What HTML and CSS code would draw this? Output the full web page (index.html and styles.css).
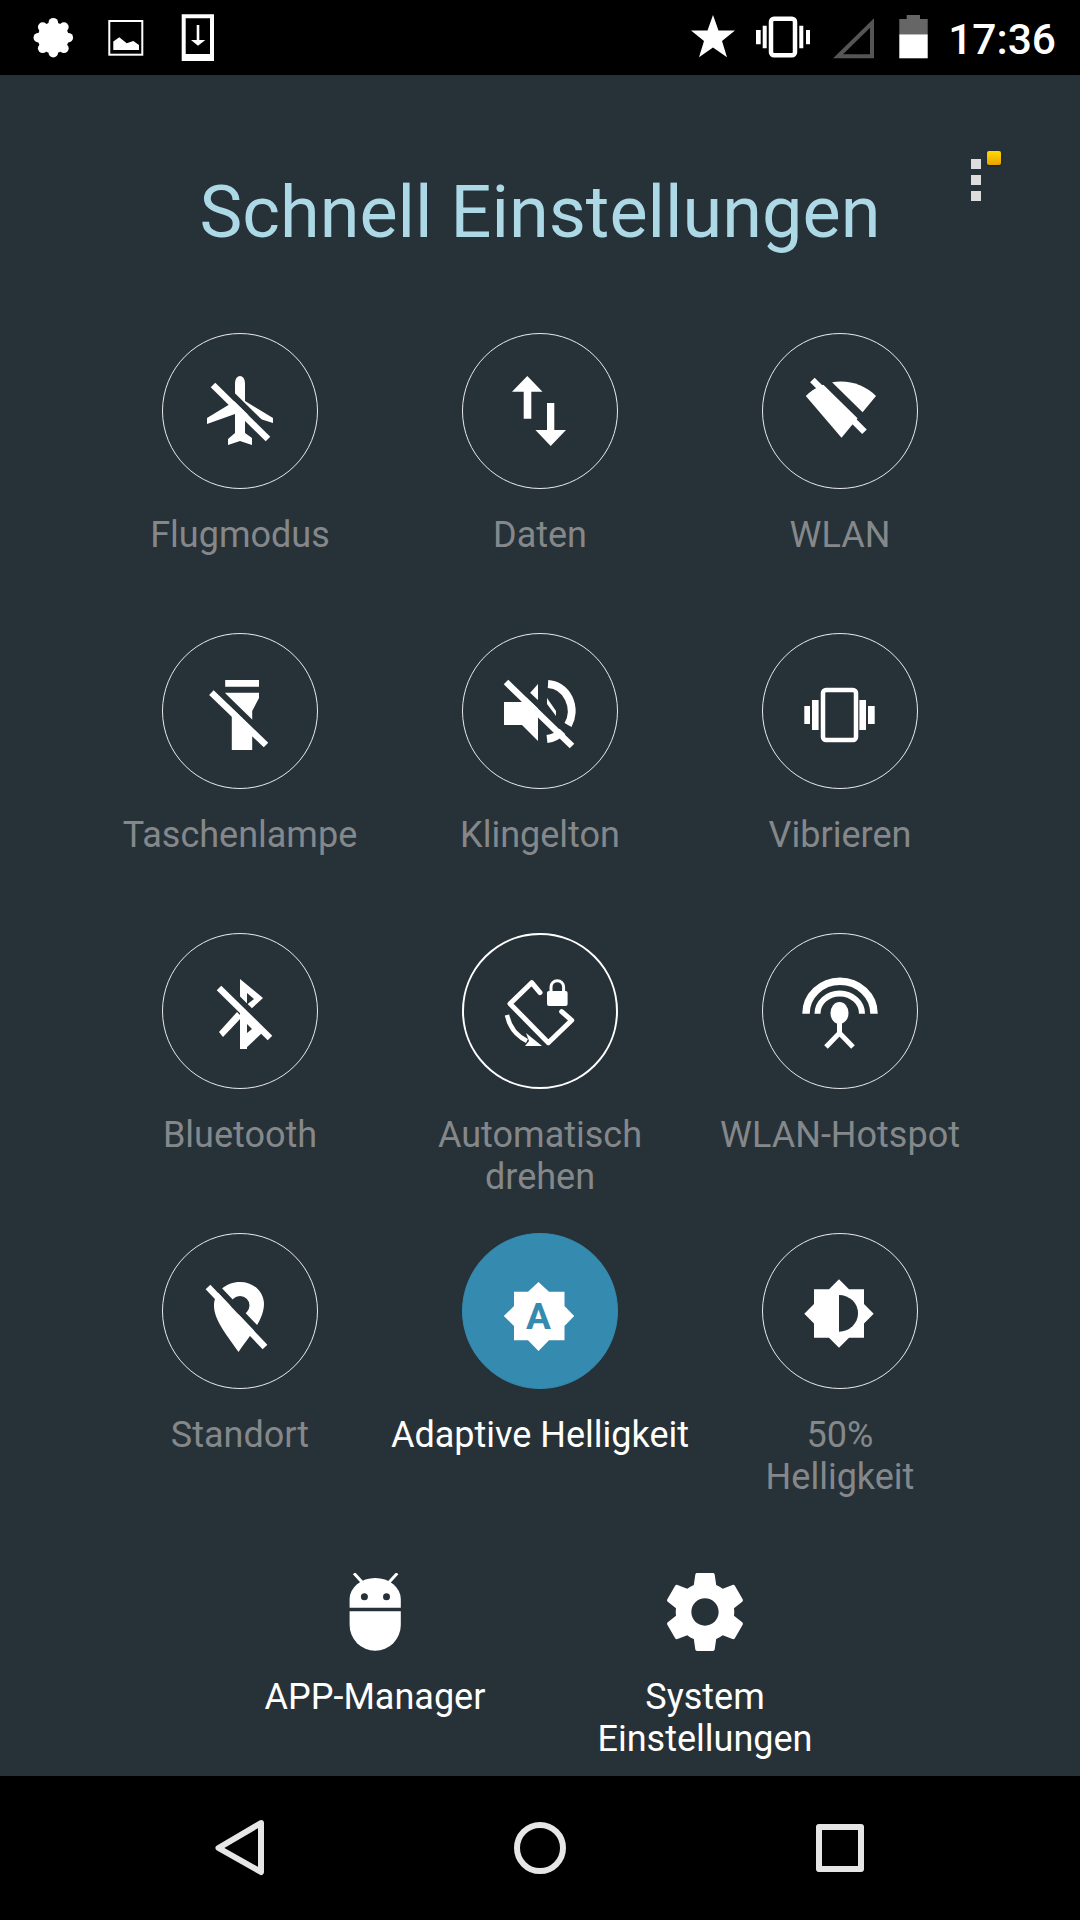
FILE: index.html
```html
<!DOCTYPE html>
<html lang="de">
<head>
  <meta charset="UTF-8">
  <title>Schnell Einstellungen</title>
  <link rel="stylesheet" href="styles.css">
</head>
<body>

  <!-- status bar -->
  <div class="status-bar">
    <div class="status-left">
      <svg width="42" height="75" viewBox="33 0 42 75">
        <circle class="ic" cx="53.300" cy="37.700" r="15.500"/>
        <circle class="ic" cx="53.300" cy="22.700" r="4.800"/>
        <circle class="ic" cx="63.900" cy="27.100" r="4.800"/>
        <circle class="ic" cx="68.300" cy="37.700" r="4.800"/>
        <circle class="ic" cx="63.900" cy="48.300" r="4.800"/>
        <circle class="ic" cx="53.300" cy="52.700" r="4.800"/>
        <circle class="ic" cx="42.700" cy="48.300" r="4.800"/>
        <circle class="ic" cx="38.300" cy="37.700" r="4.800"/>
        <circle class="ic" cx="42.700" cy="27.100" r="4.800"/>
      </svg>
      <svg width="39" height="75" viewBox="107 0 39 75"><rect class="line" x="109.300" y="21" width="33" height="33.700"/><path class="ic" d="M113.300 50 V41.500 L119.300 37.300 L126.700 43.300 L133.300 41 L139 45 V50Z"/></svg>
      <svg width="40" height="75" viewBox="178 0 40 75"><path class="ic" fill-rule="evenodd" d="M181.700 14.300 H214 V61 H181.700Z M185.700 18.300 V54 H210 V18.300Z"/><path class="ic" d="M196.700 25 H199.300 V40 H205.300 L198 45.700 L191 40 H196.700Z"/></svg>
    </div>
    <div class="status-right">
      <svg width="48" height="75" viewBox="689 0 48 75"><path class="ic" d="M713 15 L718.500 30.500 L735 30.500 L722 41 L727 57.300 L713 47.500 L699 57.300 L704 41 L691 30.500 L707.500 30.500Z"/></svg>
      <svg width="60" height="75" viewBox="753 0 60 75"><rect class="line thick" x="771" y="18.700" width="24" height="36.600" rx="3"/><path class="ic" d="M762.700 25.700 h4 v22.600 h-4z M756 30 h4.700 v14.300 h-4.700z M799.300 25.700 h4 v22.600 h-4z M806 30 h4 v14.300 h-4z"/></svg>
      <svg width="48" height="75" viewBox="829 0 48 75"><path class="signal" d="M872 23 V56.300 H838Z"/></svg>
      <svg width="40" height="75" viewBox="893 0 40 75"><path class="batt" d="M906.700 15 H920 V19 H927.700 V34.300 H899.300 V19 H906.700Z"/><rect class="ic" x="899.300" y="34.300" width="28.400" height="24"/></svg>
      <span class="clock">17:36</span>
    </div>
  </div>

  <div class="main">
    <div class="menu">
      <span class="menu-dot"></span>
      <span class="menu-dot"></span>
      <span class="menu-dot"></span>
      <span class="menu-badge"></span>
    </div>

    <h1 class="title">Schnell Einstellungen</h1>

    <div class="tiles">
      <div class="tile">
        <div class="ring">
          <svg width="100" height="100" viewBox="0 0 100 100">
            <path class="ic" d="M45 22 A5 7 0 0 1 55 22 V40 L83 57 V62 L55 53 V72 L62 77 V84 L50 80 L38 84 V78 L45 72 V53 L17 63 V57 L45 40Z"/>
            <path class="gap" d="M27 19 L82 73"/>
            <path class="slash" d="M23 24 L78 78"/>
          </svg>
        </div>
        <div class="tile-label">Flugmodus</div>
      </div>
      <div class="tile">
        <div class="ring">
          <svg width="100" height="100" viewBox="0 0 100 100">
            <path class="ic" d="M37.300 15 L52.500 30.700 H41.300 V57.700 H33.700 V30.700 H22 Z M57 42 H64.300 V69 H76 L60.700 85 L45.400 69 H57Z"/>
          </svg>
        </div>
        <div class="tile-label">Daten</div>
      </div>
      <div class="tile">
        <div class="ring">
          <svg width="100" height="100" viewBox="0 0 100 100">
            <path class="ic" d="M51.500 76.700 L15.800 35 A50 50 0 0 1 86 35Z"/>
            <path class="gap wide" d="M27 12 L80 64"/>
            <path class="slash" d="M22.400 19 L74.500 70.700"/>
          </svg>
        </div>
        <div class="tile-label">WLAN</div>
      </div>

      <div class="tile">
        <div class="ring">
          <svg width="100" height="100" viewBox="0 0 100 100">
            <path class="ic" d="M35.200 19 H69 V25.700 H35.200Z M35.200 31.700 H69 V37 L62.200 50 V89 H41.800 V50 L35.200 37Z"/>
            <path class="gap" d="M25.500 27 L80 80"/>
            <path class="slash" d="M21.400 31.700 L76 84"/>
          </svg>
        </div>
        <div class="tile-label">Taschenlampe</div>
      </div>
      <div class="tile">
        <div class="ring">
          <svg width="100" height="100" viewBox="0 0 100 100">
            <path class="ic" d="M14 41 H32 L48 23 V80 L32 64 H14Z"/>
            <path class="arc" d="M58 23 A25 27 0 0 1 78 64"/>
            <path class="arc" d="M57 78 Q66 77 73 70"/>
            <path class="ic" d="M57 37 L66 50 V55 L57 43Z"/>
            <path class="gap" d="M20 17 L87 80"/>
            <path class="slash" d="M16 21 L82 85"/>
          </svg>
        </div>
        <div class="tile-label">Klingelton</div>
      </div>
      <div class="tile">
        <div class="ring">
          <svg width="100" height="100" viewBox="0 0 100 100">
            <rect class="line phone" x="33" y="29" width="33" height="50" rx="3"/>
            <path class="ic" d="M22 39 h6.600 v30 h-6.600z M14.300 45 h5.700 v18 h-5.700z M69.400 39 h6.600 v30 h-6.600z M78 45 h6.700 v18 h-6.700z"/>
          </svg>
        </div>
        <div class="tile-label">Vibrieren</div>
      </div>

      <div class="tile">
        <div class="ring">
          <svg width="100" height="100" viewBox="0 0 100 100">
            <path class="ic" fill-rule="evenodd" d="M50 18 L73 37 L61 48 L57 44 V88 H50 V18Z M57 32 V43.500 L64 38Z"/>
            <path class="ic" d="M47 51 L52 56 L33 76 L29 71Z"/>
            <path class="ic" d="M57 58 L72 72 L55 88 H50 V80 L57 72 L62 68 L57 63Z"/>
            <path class="gap" d="M33 23 L84 73"/>
            <path class="slash" d="M29 27 L80 77"/>
          </svg>
        </div>
        <div class="tile-label">Bluetooth</div>
      </div>
      <div class="tile">
        <div class="ring on">
          <svg width="100" height="100" viewBox="0 0 100 100">
            <path class="line rotor" d="M50 31.700 L41.700 21.700 L20 42.700 L58.300 81.700 L81.700 59.300 L71.700 50.700"/>
            <rect class="ic" x="57" y="30" width="20.600" height="15" rx="2"/>
            <path class="line shackle" d="M61 31 V26 A6.300 6.300 0 0 1 73.600 26 V31"/>
            <path class="line arrow" d="M17 54 A37 37 0 0 0 37 80"/>
            <path class="ic" d="M36 72 L52 85 H35 L39 80Z"/>
          </svg>
        </div>
        <div class="tile-label">Automatisch<br>drehen</div>
      </div>
      <div class="tile">
        <div class="ring">
          <svg width="100" height="100" viewBox="0 0 100 100">
            <path class="line outer" d="M16 52.700 A34 32.500 0 0 1 84 52.700"/>
            <path class="line inner" d="M27.500 52.700 A22 20 0 0 1 72 52.700"/>
            <ellipse class="ic" cx="49.500" cy="52" rx="9" ry="11"/>
            <path class="line legs" d="M36 86 L49.500 72 L63 86 M49.500 60 V72"/>
          </svg>
        </div>
        <div class="tile-label">WLAN-Hotspot</div>
      </div>

      <div class="tile">
        <div class="ring">
          <svg width="100" height="100" viewBox="0 0 100 100">
            <path class="ic" fill-rule="evenodd" d="M50 21 C36 21 24 31 24 45 C24 60 40 78 48.500 91 C57 78 74 60 74 43 C74 31 64 21 50 21Z M50 35 A9.500 9.500 0 1 1 50 54 A9.500 9.500 0 1 1 50 35Z"/>
            <path class="gap" d="M22 21 L79 81"/>
            <path class="slash" d="M18 26 L75 86"/>
          </svg>
        </div>
        <div class="tile-label">Standort</div>
      </div>
      <div class="tile active">
        <div class="ring">
          <svg width="100" height="100" viewBox="0 0 100 100">
            <path class="ic" d="M48.500 21 L59 30.700 H74.500 V45 L84.200 55 L74.500 65 V79.300 H59 L48.500 90 L38 79.300 H24 V65 L13.800 55 L24 45 V30.700 H38Z"/>
            <text class="badge-a" x="48.500" y="68.300">A</text>
          </svg>
        </div>
        <div class="tile-label">Adaptive Helligkeit</div>
      </div>
      <div class="tile">
        <div class="ring">
          <svg width="100" height="100" viewBox="0 0 100 100">
            <path class="ic" d="M49 18.300 L59 28.300 H74 V43 L83.700 52.700 L74 62.500 V76.700 H59 L49 86.700 L39 76.700 H24 V62.500 L14.300 52.700 L24 43 V28.300 H39Z"/>
            <path class="half" d="M49 34 A19 18.300 0 0 1 49 70.700Z"/>
          </svg>
        </div>
        <div class="tile-label">50%<br>Helligkeit</div>
      </div>
    </div>

    <div class="shortcuts">
      <div class="shortcut">
        <svg width="80" height="78" viewBox="0 0 80 78">
          <path class="ic" d="M14.600 34.700 V26 A25.600 21 0 0 1 65.800 26 V34.700Z"/>
          <path class="ic" d="M14.600 38.300 H65.800 V52 A25.600 25.700 0 0 1 14.600 52Z"/>
          <path class="antenna" d="M19 0.300 L27.600 9.700 M62.300 0.300 L53.600 9.700"/>
          <circle class="half" cx="29.400" cy="23.700" r="3.500"/>
          <circle class="half" cx="51.500" cy="23.700" r="3.500"/>
        </svg>
        <div class="shortcut-label">APP-Manager</div>
      </div>
      <div class="shortcut">
        <svg width="94" height="78" viewBox="0 2 24 20">
          <path class="ic" d="M19.430 12.980c.04-.32.07-.64.07-.98s-.03-.66-.07-.98l2.110-1.650c.19-.15.24-.42.12-.64l-2-3.460c-.12-.22-.39-.3-.61-.22l-2.490 1c-.52-.4-1.080-.73-1.690-.98l-.38-2.650C14.460 2.180 14.250 2 14 2h-4c-.25 0-.46.18-.49.42l-.38 2.650c-.61.25-1.170.59-1.690.98l-2.490-1c-.23-.09-.49 0-.61.22l-2 3.460c-.13.22-.07.49.12.64l2.110 1.650c-.04.32-.07.65-.07.98s.03.66.07.98l-2.110 1.650c-.19.15-.24.42-.12.64l2 3.460c.12.22.39.3.61.22l2.490-1c.52.4 1.080.73 1.690.98l.38 2.650c.03.24.24.42.49.42h4c.25 0 .46-.18.49-.42l.38-2.650c.61-.25 1.170-.59 1.690-.98l2.490 1c.23.09.49 0 .61-.22l2-3.460c.12-.22.07-.49-.12-.64l-2.110-1.650zM12 15.500c-1.930 0-3.500-1.570-3.500-3.500s1.570-3.500 3.500-3.500 3.500 1.570 3.500 3.500-1.570 3.500-3.500 3.500z"/>
        </svg>
        <div class="shortcut-label">System<br>Einstellungen</div>
      </div>
    </div>
  </div>

  <!-- nav bar -->
  <div class="nav-bar">
    <div class="nav-cell">
      <svg width="50" height="56" viewBox="215 1820 50 56"><path class="nav-back" d="M261 1823 L218.500 1848 L261 1872Z"/></svg>
    </div>
    <div class="nav-cell"><span class="nav-home"></span></div>
    <div class="nav-cell"><span class="nav-recent"></span></div>
  </div>

</body>
</html>
```

FILE: styles.css
```css
* { box-sizing: border-box; }
html, body { margin: 0; padding: 0; }
body { width: 1080px; height: 1920px; background: #273238; font-family: Roboto, "Liberation Sans", sans-serif; overflow: hidden; }

.status-bar { height: 75px; background: #000; display: flex; justify-content: space-between; padding: 0 24px 0 33px; }
.status-left, .status-right { display: flex; align-items: center; }
.status-left { gap: 32px; }
.status-right { gap: 16px; }
.status-bar svg { display: block; }
.clock { color: #fff; font-size: 42.5px; font-weight: 500; line-height: 75px; padding-top: 4px; margin-left: -1px; }

.ic { fill: #fff; }
.line { fill: none; stroke: #fff; stroke-width: 2; }
.thick { stroke-width: 4.5; }
.rotor { stroke-width: 5; stroke-linejoin: round; stroke-linecap: round; }
.phone { stroke-width: 4.5; }
.shackle { stroke-width: 3; }
.arrow { stroke-width: 4.5; }
.outer { stroke-width: 7.5; }
.inner { stroke-width: 6; }
.legs { stroke-width: 5; }
.signal { fill: none; stroke: #555; stroke-width: 4; }
.batt { fill: #666; }
.gap { fill: none; stroke: #273238; stroke-width: 6; }
.gap.wide { stroke-width: 8; }
.slash { fill: none; stroke: #fff; stroke-width: 6.5; }
.arc { fill: none; stroke: #fff; stroke-width: 8; }
.half { fill: #273238; }
.antenna { fill: none; stroke: #fff; stroke-width: 3; }
.badge-a { fill: #358ab0; font-size: 37px; font-weight: 700; text-anchor: middle; }

.main { position: relative; height: 1701px; }
.menu { position: absolute; top: 84px; left: 971px; width: 10px; display: flex; flex-direction: column; gap: 6px; }
.menu-dot { display: block; width: 10px; height: 10px; background: #ddd; }
.menu-badge { position: absolute; top: -8px; left: 16px; width: 14px; height: 14px; border-radius: 2px; background: linear-gradient(#ffdc00, #e8a200); box-shadow: 0 1px 2px rgba(0,0,0,0.4); }

.title { margin: 0; height: 258px; padding-top: 96px; text-align: center; color: #add8e6; font-size: 72px; font-weight: 400; line-height: 84px; }

.tiles { display: grid; grid-template-columns: repeat(3, 300px); grid-auto-rows: 300px; padding: 0 90px; }
.tile { display: flex; flex-direction: column; align-items: center; }
.ring { width: 156px; height: 156px; border: 1px solid #e8eaeb; border-radius: 50%; display: flex; align-items: center; justify-content: center; }
.ring.on { border: 2px solid #fff; }
.tile-label { margin-top: 25px; color: #85888b; font-size: 36px; line-height: 42px; text-align: center; white-space: nowrap; }
.tile.active .ring { background: #358ab0; border-color: #358ab0; }
.tile.active .tile-label { color: #fff; }

.shortcuts { display: flex; justify-content: center; padding-top: 40px; }
.shortcut { width: 330px; display: flex; flex-direction: column; align-items: center; }
.shortcut svg { display: block; }
.shortcut-label { margin-top: 25px; color: #fff; font-size: 36px; line-height: 42px; text-align: center; white-space: nowrap; }

.nav-bar { height: 144px; background: #000; display: grid; grid-template-columns: repeat(3, 300px); padding: 0 90px; }
.nav-cell { display: flex; align-items: center; justify-content: center; }
.nav-back { fill: none; stroke: #e6e6e6; stroke-width: 6; stroke-linejoin: round; }
.nav-home { width: 52px; height: 52px; border: 6px solid #e6e6e6; border-radius: 50%; }
.nav-recent { width: 48px; height: 48px; border: 6px solid #e6e6e6; border-radius: 3px; }
```
